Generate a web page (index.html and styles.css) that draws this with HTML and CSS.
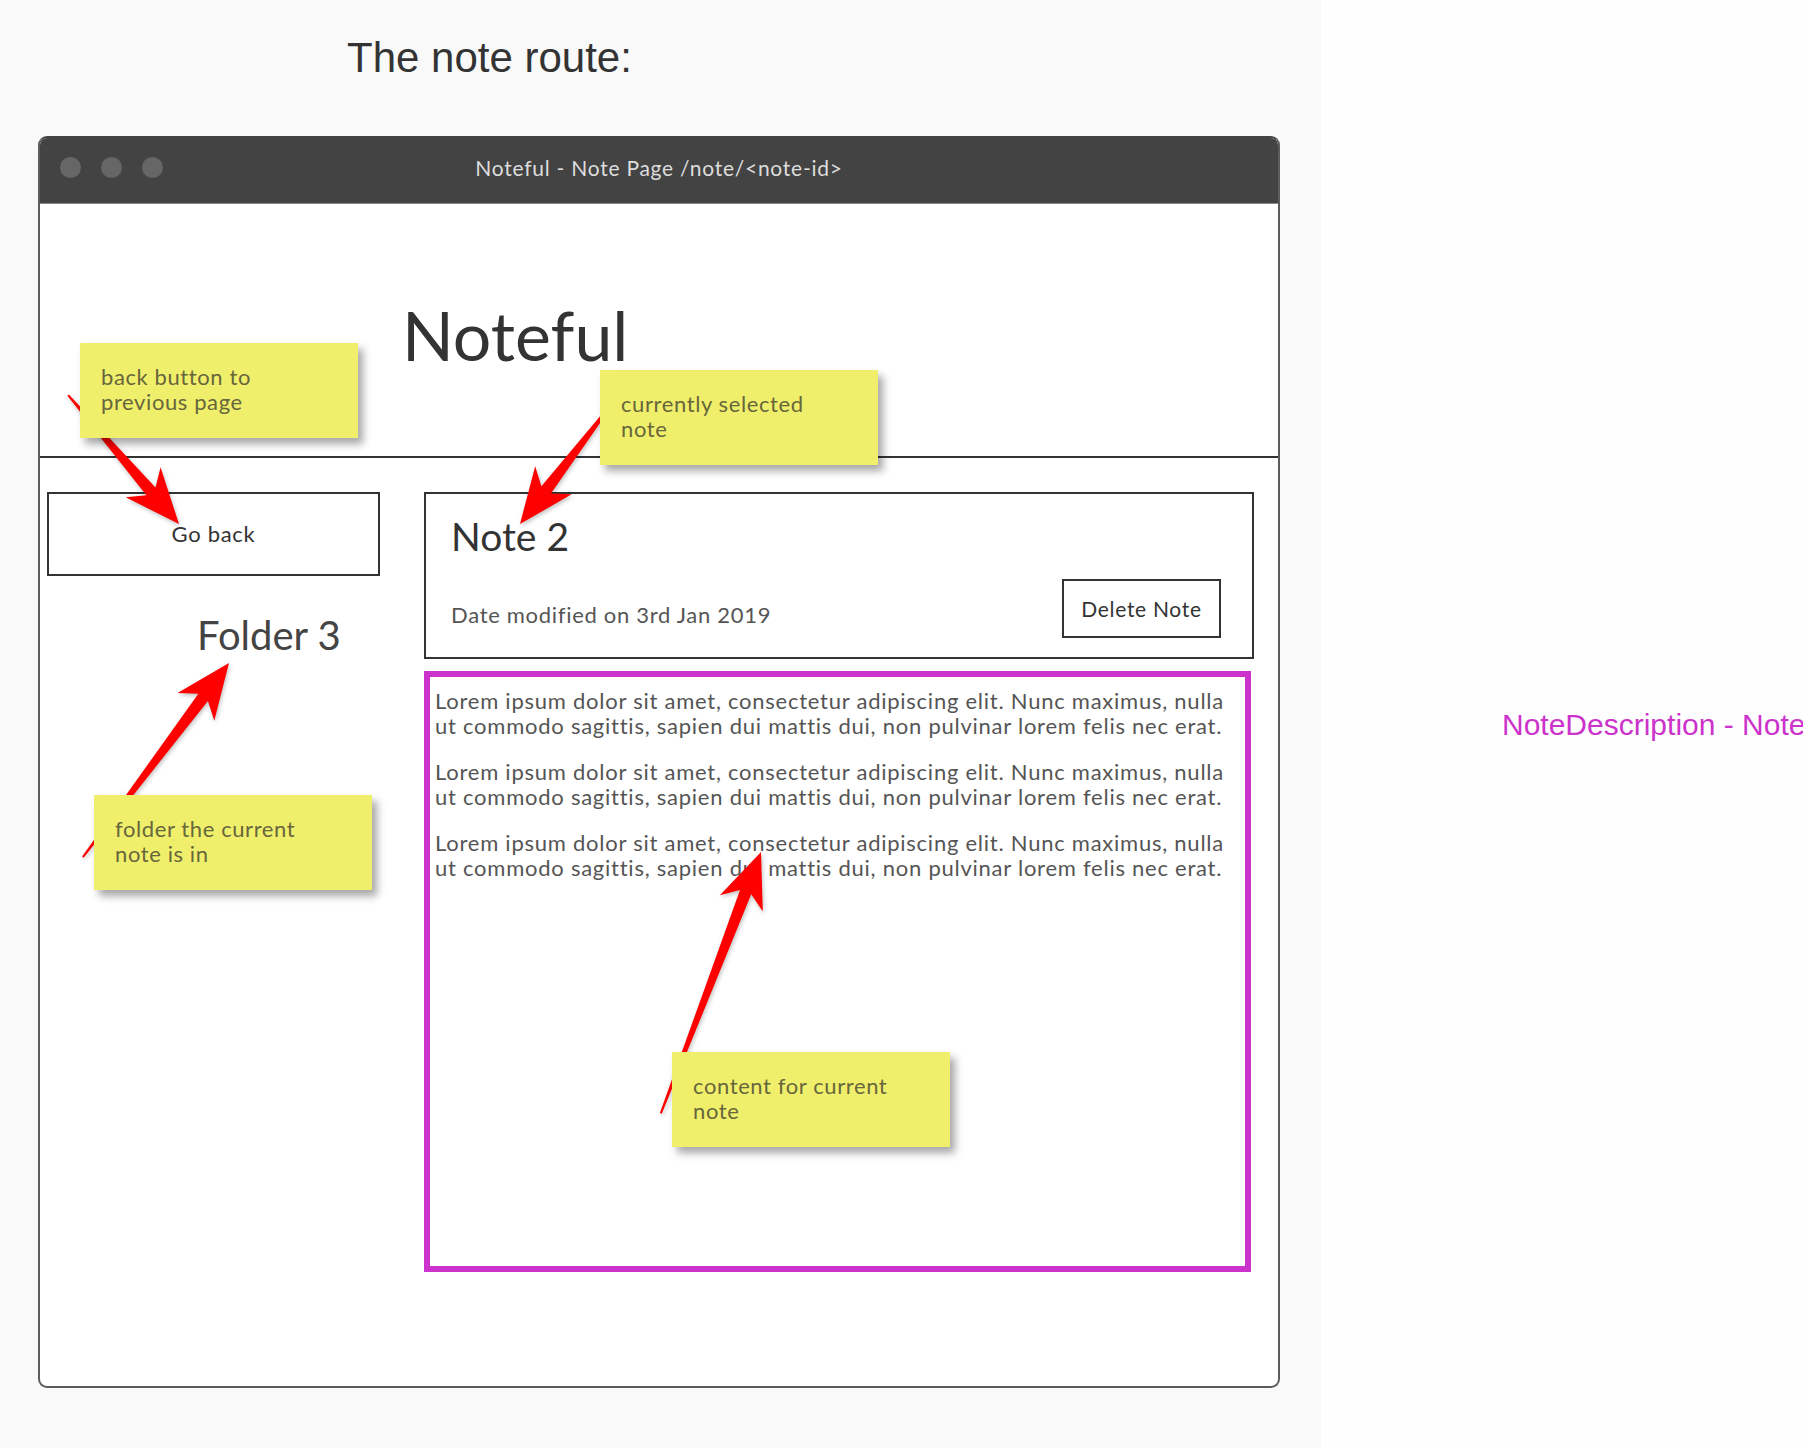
FILE: index.html
```html
<!DOCTYPE html>
<html lang="en">
<head>
<meta charset="utf-8">
<title>The note route</title>
<link rel="stylesheet" href="styles.css">
</head>
<body>
<div class="page">
  <div class="canvas">
    <h1 class="route-title">The note route:</h1>
    <div class="window">
      <div class="titlebar">
        <div class="dots"><span class="dot"></span><span class="dot"></span><span class="dot"></span></div>
        <div class="win-title">Noteful - Note Page /note/&lt;note-id&gt;</div>
        <div></div>
      </div>
      <div class="app">
        <header class="app-header"><h2 class="app-name">Noteful</h2></header>
        <div class="app-main">
          <aside class="sidebar">
            <button class="go-back">Go back</button>
            <h3 class="folder-name">Folder 3</h3>
          </aside>
          <section class="note-area">
            <div class="note-card">
              <h2 class="note-title">Note 2</h2>
              <div class="note-meta">
                <span class="note-date">Date modified on 3rd Jan 2019</span>
                <button class="delete-btn">Delete Note</button>
              </div>
            </div>
            <div class="note-content">
              <p>Lorem ipsum dolor sit amet, consectetur adipiscing elit. Nunc maximus, nulla ut commodo sagittis, sapien dui mattis dui, non pulvinar lorem felis nec erat.</p>
              <p>Lorem ipsum dolor sit amet, consectetur adipiscing elit. Nunc maximus, nulla ut commodo sagittis, sapien dui mattis dui, non pulvinar lorem felis nec erat.</p>
              <p>Lorem ipsum dolor sit amet, consectetur adipiscing elit. Nunc maximus, nulla ut commodo sagittis, sapien dui mattis dui, non pulvinar lorem felis nec erat.</p>
            </div>
          </section>
        </div>
      </div>
    </div>

    <svg class="arrows" width="1321" height="1448" viewBox="0 0 1321 1448" xmlns="http://www.w3.org/2000/svg">
      <g fill="#ff0000">
        <polygon transform="translate(179 524) rotate(49.29)" points="0,0 -55,23 -43,6 -170,1 -170,-1 -43,-6 -55,-23"/>
        <polygon transform="translate(520 524) rotate(127.46)" points="0,0 -55,23 -43,6 -156,1 -156,-1 -43,-6 -55,-23"/>
        <polygon transform="translate(229 663) rotate(-53.04)" points="0,0 -55,23 -43,6 -243,1 -243,-1 -43,-6 -55,-23"/>
        <polygon transform="translate(761 852) rotate(-69.04)" points="0,0 -55,23 -43,6 -280,1 -280,-1 -43,-6 -55,-23"/>
      </g>
    </svg>

    <div class="sticky s1">back button to<br>previous page</div>
    <div class="sticky s2">currently selected<br>note</div>
    <div class="sticky s3">folder the current<br>note is in</div>
    <div class="sticky s4">content for current<br>note</div>
  </div>
  <div class="side">NoteDescription - Note</div>
</div>
</body>
</html>
```

FILE: styles.css
```css
html, body {
  margin: 0;
  padding: 0;
}

body {
  font-family: Lato, "Noto Sans", sans-serif;
  background: #fefefe;
}

.page {
  display: flex;
  width: 1803px;
  height: 1448px;
  overflow: hidden;
}

.canvas {
  position: relative;
  flex: none;
  width: 1321px;
  height: 1448px;
  background: #f9f9f9;
}

.side {
  flex: 1;
  min-width: 0;
  background: #fefefe;
  padding: 708px 0 0 181px;
  font: 400 30px/34px "Liberation Sans", Arial, sans-serif;
  color: #cc33cc;
  white-space: nowrap;
}

.route-title {
  margin: 0;
  padding: 37px 0 0 347px;
  font: 400 42px/42px "Liberation Sans", Arial, sans-serif;
  color: #333333;
}

.window {
  margin: 57px 0 0 38px;
  width: 1242px;
  height: 1252px;
  box-sizing: border-box;
  border: 2px solid #5c5c5c;
  border-top-color: #434343;
  border-radius: 9px;
  background: #ffffff;
  overflow: hidden;
  display: flex;
  flex-direction: column;
}

.titlebar {
  flex: none;
  height: 66px;
  box-sizing: border-box;
  padding-bottom: 6px;
  background: #434343;
  border-bottom: 1px solid #8a8a8a;
  display: grid;
  grid-template-columns: 1fr auto 1fr;
  align-items: center;
}

.dots {
  display: flex;
  gap: 20px;
  padding-left: 20px;
}

.dot {
  width: 21px;
  height: 21px;
  border-radius: 50%;
  background: #666666;
}

.win-title {
  font: 400 21px/24px Lato, sans-serif;
  letter-spacing: 0.75px;
  color: #dddddd;
}

.app {
  flex: 1;
  display: flex;
  flex-direction: column;
}

.app-header {
  flex: none;
  height: 254px;
  box-sizing: border-box;
  border-bottom: 2px solid #333333;
  padding: 90px 0 0 362px;
}

.app-name {
  margin: 0;
  font: 400 68px/1.2 Lato, sans-serif;
  color: #333333;
}

.app-main {
  display: flex;
  gap: 44px;
  padding: 34px 0 0 7px;
}

.sidebar {
  flex: none;
  width: 333px;
}

.go-back {
  display: block;
  width: 333px;
  height: 84px;
  box-sizing: border-box;
  padding: 0;
  border: 2px solid #333333;
  background: #ffffff;
  font: 400 22px/26px Lato, sans-serif;
  letter-spacing: 0.7px;
  color: #333333;
}

.folder-name {
  margin: 35px 0 0;
  padding-left: 150px;
  font: 400 40px/48px Lato, sans-serif;
  color: #444444;
}

.note-area {
  flex: none;
  width: 830px;
}

.note-card {
  height: 167px;
  box-sizing: border-box;
  border: 2px solid #333333;
  padding: 18px 31px 19px 25px;
  display: flex;
  flex-direction: column;
  justify-content: space-between;
}

.note-title {
  margin: 0;
  font: 400 39px/48px Lato, sans-serif;
  color: #333333;
}

.note-meta {
  display: flex;
  justify-content: space-between;
  align-items: flex-end;
}

.note-date {
  padding-bottom: 11px;
  font: 400 22px/25px Lato, sans-serif;
  letter-spacing: 0.7px;
  color: #555555;
}

.delete-btn {
  width: 159px;
  height: 59px;
  box-sizing: border-box;
  padding: 0;
  border: 2px solid #333333;
  background: #ffffff;
  font: 400 21px/25px Lato, sans-serif;
  letter-spacing: 0.7px;
  color: #333333;
}

.note-content {
  margin-top: 12px;
  width: 827px;
  height: 601px;
  box-sizing: border-box;
  border: 6px solid #cc33cc;
  padding: 11px 8px 0 5px;
}

.note-content p {
  margin: 0 0 21px;
  font: 400 22px/25px Lato, sans-serif;
  letter-spacing: 0.75px;
  color: #555555;
}

.arrows {
  position: absolute;
  left: 0;
  top: 0;
  pointer-events: none;
  filter: drop-shadow(1px 2px 2px rgba(0, 0, 0, 0.25));
}

.sticky {
  position: absolute;
  width: 278px;
  height: 95px;
  box-sizing: border-box;
  padding: 21px 0 0 21px;
  background: #f0ef6b;
  box-shadow: 5px 6px 8px rgba(0, 0, 0, 0.35);
  font: 400 22px/25px Lato, sans-serif;
  letter-spacing: 0.6px;
  color: #67663c;
}

.s1 { left: 80px; top: 343px; }
.s2 { left: 600px; top: 370px; }
.s3 { left: 94px; top: 795px; }
.s4 { left: 672px; top: 1052px; }
```
